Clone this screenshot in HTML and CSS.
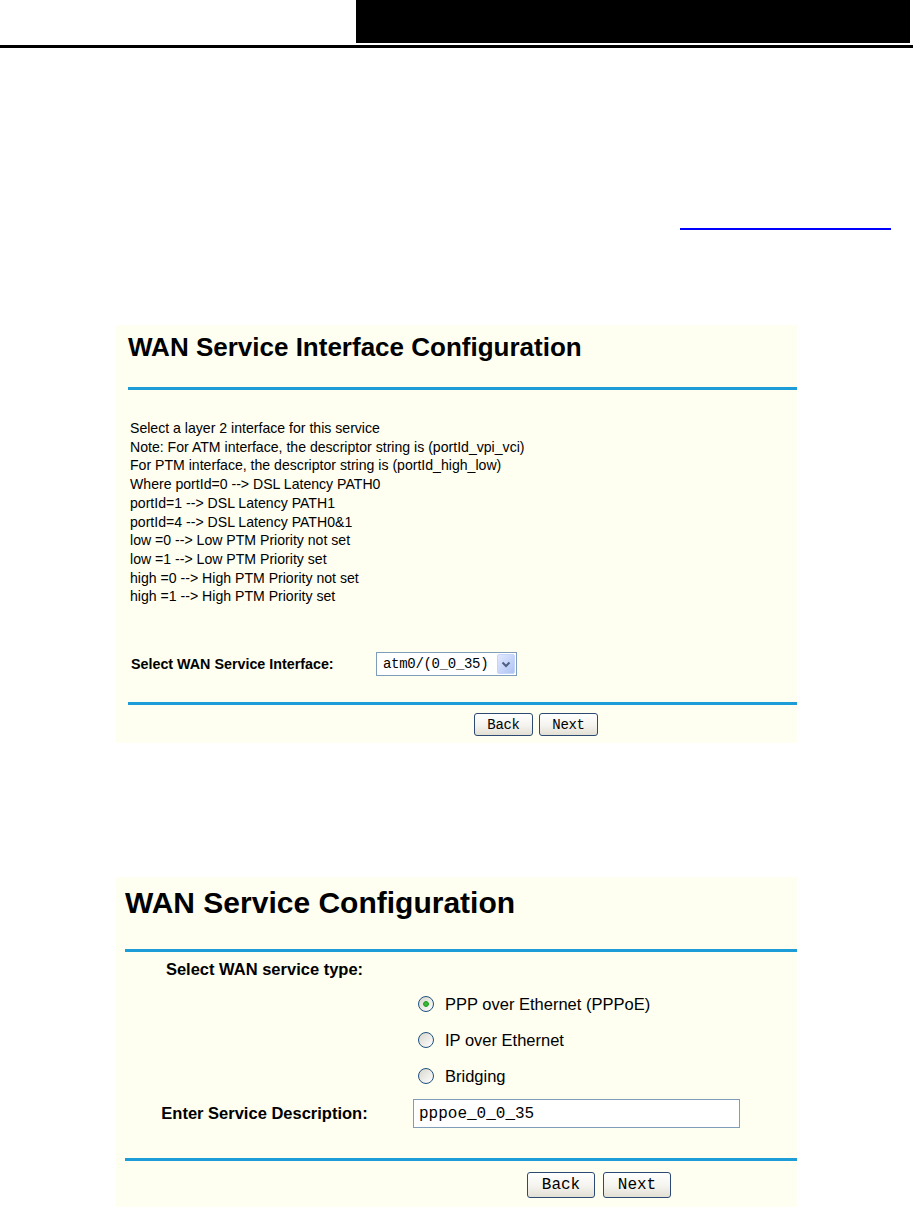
FILE: index.html
```html
<!DOCTYPE html>
<html lang="en">
<head>
    <meta charset="UTF-8">
    <title>WAN Service Setup</title>
    <link rel="stylesheet" href="styles.css">
</head>
<body>

<div class="page-head">
    <div class="head-bar"></div>
</div>
<div class="head-rule"></div>

<p class="ref-row"><a class="ref-link" href="#"></a></p>

<!-- step 1: pick the layer 2 interface -->
<section class="panel panel-iface">
    <h2 class="panel-title">WAN Service Interface Configuration</h2>

    <div class="notes">
        <p>Select a layer 2 interface for this service</p>
        <p>Note: For ATM interface, the descriptor string is (portId_vpi_vci)</p>
        <p>For PTM interface, the descriptor string is (portId_high_low)</p>
        <p>Where portId=0 --&gt; DSL Latency PATH0</p>
        <p>portId=1 --&gt; DSL Latency PATH1</p>
        <p>portId=4 --&gt; DSL Latency PATH0&amp;1</p>
        <p>low =0 --&gt; Low PTM Priority not set</p>
        <p>low =1 --&gt; Low PTM Priority set</p>
        <p>high =0 --&gt; High PTM Priority not set</p>
        <p>high =1 --&gt; High PTM Priority set</p>
    </div>

    <div class="field-row">
        <label class="field-label" for="wanIface">Select WAN Service Interface:</label>
        <div class="select-wrap">
            <select id="wanIface" class="xp-select">
                <option>atm0/(0_0_35)</option>
            </select>
            <svg class="select-arrow" width="18" height="20" viewBox="0 0 18 20">
                <defs>
                    <linearGradient id="arrowFill" x1="0" y1="0" x2="1" y2="1">
                        <stop offset="0" stop-color="#e2eafe"/>
                        <stop offset="1" stop-color="#adc2f3"/>
                    </linearGradient>
                </defs>
                <rect x="0.5" y="0.5" width="17" height="19" rx="1.5" fill="url(#arrowFill)" stroke="#c6d5fb"/>
                <path d="M5.5 8.5 L9 12 L12.5 8.5" fill="none" stroke="#4d6185" stroke-width="2"/>
            </svg>
        </div>
    </div>

    <div class="rule"></div>
    <div class="actions">
        <button class="xp-btn">Back</button>
        <button class="xp-btn">Next</button>
    </div>
</section>

<!-- step 2: pick the service type -->
<section class="panel panel-service">
    <h2 class="panel-title">WAN Service Configuration</h2>

    <div class="svc-row row-type">
        <span class="svc-label">Select WAN service type:</span>
    </div>
    <label class="radio-row"><input type="radio" name="svc" class="radio" checked> PPP over Ethernet (PPPoE)</label>
    <label class="radio-row"><input type="radio" name="svc" class="radio"> IP over Ethernet</label>
    <label class="radio-row"><input type="radio" name="svc" class="radio"> Bridging</label>

    <div class="svc-row row-desc">
        <label class="svc-label" for="svcDesc">Enter Service Description:</label>
        <input type="text" id="svcDesc" class="text-input" value="pppoe_0_0_35">
    </div>

    <div class="rule"></div>
    <div class="actions">
        <button class="xp-btn">Back</button>
        <button class="xp-btn">Next</button>
    </div>
</section>

</body>
</html>
```

FILE: styles.css
```css
body {
    margin: 0;
    font-family: "Liberation Sans", Arial, sans-serif;
    color: #000;
    background: #fff;
}

/* page header */
.page-head {
    height: 43px;
}
.head-bar {
    margin-left: 356px;
    width: 554px;
    height: 43px;
    background: #000;
}
.head-rule {
    margin-top: 2px;
    height: 3px;
    background: #000;
}
.ref-row {
    margin: 180px 0 0;
    padding-left: 680px;
    height: 2px;
}
.ref-link {
    display: block;
    width: 211px;
    height: 0;
    border-bottom: 2px solid #0000ff;
}

/* panels */
.panel {
    margin-left: 116px;
    width: 681px;
    background: #fefef1;
}
.panel-iface {
    margin-top: 95px;
}
.panel-service {
    margin-top: 134px;
}
.panel-title {
    margin: 0 0 0 12px;
    padding: 7px 0 25px;
    font-size: 26px;
    line-height: 30px;
    font-weight: bold;
    border-bottom: 3px solid #1c9dd7;
}
.rule {
    margin: 26px 0 0 12px;
    height: 3px;
    background: #1c9dd7;
}
.actions {
    display: flex;
    gap: 6px;
    margin-top: 8px;
    padding: 0 0 7px 358px;
}

.notes {
    margin-top: 29px;
    padding-left: 14px;
    font-size: 14.1px;
    line-height: 18.7px;
}
.notes p {
    margin: 0;
}

.field-row {
    display: flex;
    align-items: center;
    height: 24px;
    margin-top: 46px;
    padding-left: 15px;
}
.field-label {
    width: 245px;
    font-size: 14.3px;
    font-weight: bold;
}
.select-wrap {
    position: relative;
    width: 141px;
    height: 24px;
}
.xp-select {
    appearance: none;
    -webkit-appearance: none;
    width: 141px;
    height: 24px;
    margin: 0;
    padding: 0 0 0 6px;
    border: 1px solid #7f9db9;
    border-radius: 0;
    background: #fff;
    color: #000;
    font-family: "Liberation Mono", "Courier New", monospace;
    font-size: 14px;
    letter-spacing: -0.3px;
}
.select-arrow {
    position: absolute;
    top: 2px;
    right: 2px;
}

/* XP style push buttons */
.xp-btn {
    width: 59px;
    height: 23px;
    padding: 0;
    border: 1px solid #2c4a74;
    border-radius: 3px;
    background: linear-gradient(#ffffff, #f4f3ee 55%, #e2dfd4);
    color: #000;
    font-family: "Liberation Mono", "Courier New", monospace;
    font-size: 14px;
    letter-spacing: -0.3px;
    cursor: pointer;
}

/* second panel */
.panel-service .panel-title {
    margin-left: 9px;
    padding: 9px 0 29px;
    font-size: 30px;
    line-height: 34px;
}
.svc-row {
    display: flex;
    align-items: center;
}
.svc-label {
    width: 297px;
    text-align: center;
    font-size: 16.5px;
    font-weight: bold;
}
.row-type {
    height: 34px;
}
.radio-row {
    display: flex;
    align-items: center;
    gap: 11px;
    height: 36px;
    padding-left: 302px;
    font-size: 16.5px;
}
.radio {
    appearance: none;
    -webkit-appearance: none;
    width: 16px;
    height: 16px;
    margin: 0;
    border: 1px solid #1c5180;
    border-radius: 50%;
    background: linear-gradient(135deg, #d8d6cc, #ffffff);
}
.radio:checked {
    background: radial-gradient(circle, #4cc24c 0, #21a121 2.5px, transparent 3.2px),
                linear-gradient(135deg, #d8d6cc, #ffffff);
}
.row-desc {
    height: 29px;
    margin-top: 5px;
}
.text-input {
    box-sizing: border-box;
    width: 327px;
    height: 29px;
    margin: 0;
    padding: 0 0 0 5px;
    border: 1px solid #7f9db9;
    background: #fff;
    color: #000;
    font-family: "Liberation Mono", "Courier New", monospace;
    font-size: 16px;
}
.panel-service .rule {
    margin: 30px 0 0 9px;
}
.panel-service .actions {
    gap: 8px;
    margin-top: 11px;
    padding: 0 0 9px 411px;
}
.panel-service .xp-btn {
    width: 68px;
    height: 26px;
    font-size: 16px;
    letter-spacing: 0;
}
```
